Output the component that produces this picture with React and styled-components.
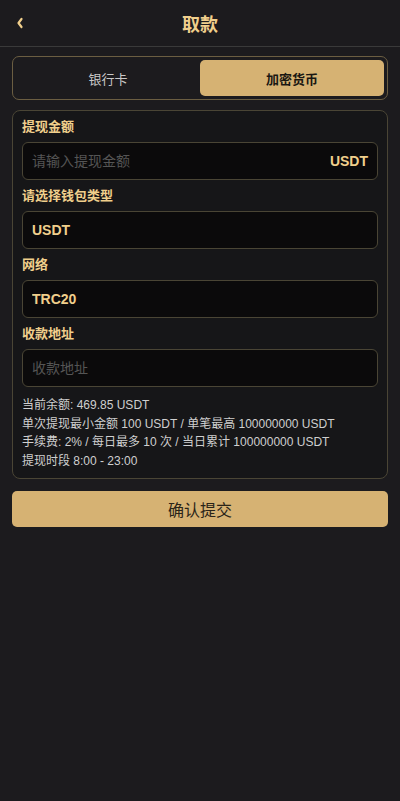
import React, { useState } from "react"
import styled, { createGlobalStyle } from "styled-components"

const GlobalStyle = createGlobalStyle`
  html, body {
    margin: 0;
    padding: 0;
    background: #1c1b1e;
    font-family: "Liberation Sans", Arial, "Noto Sans CJK SC", sans-serif;
  }
  * { box-sizing: border-box; }
`

const Page = styled.div`
  min-height: 801px;
  background: #1c1b1e;
  color: #ddd;
`

const Header = styled.div`
  position: relative;
  height: 47px;
  display: flex;
  align-items: center;
  justify-content: center;
  border-bottom: 1px solid #3a3a3a;
`

const Back = styled.button`
  position: absolute;
  left: 8px;
  top: 11px;
  width: 24px;
  height: 24px;
  padding: 0;
  border: none;
  background: none;
  display: flex;
  align-items: center;
  justify-content: center;
`

const Title = styled.h1`
  margin: 0;
  font-size: 18px;
  font-weight: bold;
  color: #f0cf8c;
`

const Body = styled.div`
  padding: 9px 12px;
  display: flex;
  flex-direction: column;
  gap: 10px;
`

const Tabs = styled.div`
  display: flex;
  height: 44px;
  padding: 3px;
  border: 1px solid #6b5e42;
  border-radius: 7px;
`

const Tab = styled.button`
  flex: 1;
  border: none;
  border-radius: 5px;
  font-family: inherit;
  font-size: 13px;
  font-weight: ${(p) => (p.$active ? "bold" : "normal")};
  background: ${(p) => (p.$active ? "#d6b273" : "transparent")};
  color: ${(p) => (p.$active ? "#1a1712" : "#c8c8c8")};
`

const Card = styled.div`
  border: 1px solid #4a4535;
  border-radius: 8px;
  background: #161618;
  padding: 6px 9px 8px;
`

const Field = styled.div`
  display: flex;
  flex-direction: column;
  margin-bottom: 6px;
`

const Label = styled.div`
  font-size: 13px;
  line-height: 20px;
  font-weight: bold;
  color: #f0cf8c;
  margin-bottom: 5px;
`

const InputBox = styled.div`
  height: 38px;
  display: flex;
  align-items: center;
  padding: 0 9px 0 9px;
  border: 1px solid #4a4535;
  border-radius: 6px;
  background: #0b0a0b;
`

const Input = styled.input`
  flex: 1;
  min-width: 0;
  padding: 0;
  border: none;
  outline: none;
  background: transparent;
  font-family: inherit;
  font-size: 14px;
  color: #f0cf8c;
  font-weight: ${(p) => (p.$bold ? "bold" : "normal")};
  &::placeholder {
    color: #555;
    font-weight: normal;
  }
`

const Unit = styled.span`
  font-size: 14px;
  font-weight: bold;
  color: #f0cf8c;
`

const Info = styled.div`
  margin-top: 9px;
  font-size: 12px;
  line-height: 18.5px;
  color: #cfcfcf;
`

const Submit = styled.button`
  height: 36px;
  margin-top: 2px;
  border: none;
  border-radius: 5px;
  background: #d6b273;
  color: #2a2418;
  font-family: inherit;
  font-size: 16px;
`

export default function App() {
  const [tab, setTab] = useState(1)
  return (
    <Page>
      <GlobalStyle />
      <Header>
        <Back aria-label="back">
          <svg width="10" height="12" viewBox="0 0 10 12">
            <path d="M6.5 2 L3.5 6 L6.5 10" fill="none" stroke="#f0cf8c" strokeWidth="2.2" strokeLinecap="round" strokeLinejoin="round" />
          </svg>
        </Back>
        <Title>取款</Title>
      </Header>
      <Body>
        <Tabs>
          <Tab $active={tab === 0} onClick={() => setTab(0)}>银行卡</Tab>
          <Tab $active={tab === 1} onClick={() => setTab(1)}>加密货币</Tab>
        </Tabs>
        <Card>
          <Field>
            <Label>提现金额</Label>
            <InputBox>
              <Input placeholder="请输入提现金额" />
              <Unit>USDT</Unit>
            </InputBox>
          </Field>
          <Field>
            <Label>请选择钱包类型</Label>
            <InputBox>
              <Input $bold readOnly value="USDT" />
            </InputBox>
          </Field>
          <Field>
            <Label>网络</Label>
            <InputBox>
              <Input $bold readOnly value="TRC20" />
            </InputBox>
          </Field>
          <Field>
            <Label>收款地址</Label>
            <InputBox>
              <Input placeholder="收款地址" />
            </InputBox>
          </Field>
          <Info>
            <div>当前余额: 469.85 USDT</div>
            <div>单次提现最小金额 100 USDT / 单笔最高 100000000 USDT</div>
            <div>手续费: 2% / 每日最多 10 次 / 当日累计 100000000 USDT</div>
            <div>提现时段 8:00 - 23:00</div>
          </Info>
        </Card>
        <Submit>确认提交</Submit>
      </Body>
    </Page>
  )
}
